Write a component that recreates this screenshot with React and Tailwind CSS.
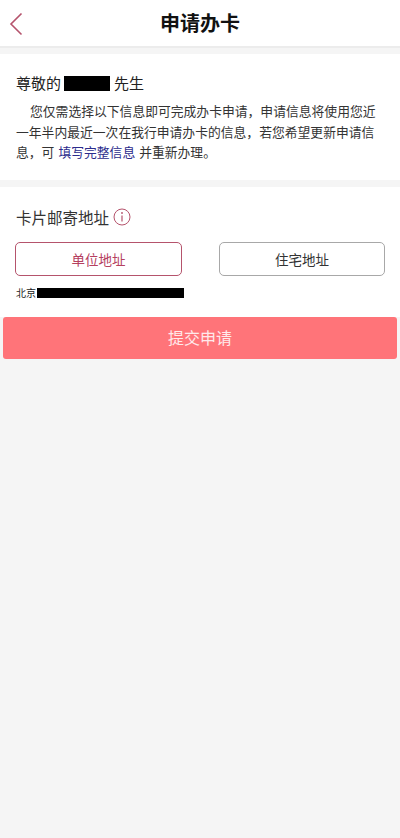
import React from "react";

const App = () => {
  return (
    <div className="w-[400px] h-[838px] flex flex-col bg-[#f5f5f5] font-['Noto_Sans_CJK_SC',sans-serif]">
      {/* Header */}
      <header className="h-[48px] shrink-0 bg-white border-b-2 border-[#ececec] flex items-center justify-center relative">
        <svg className="absolute left-[9px] top-[12px]" width="14" height="24" viewBox="0 0 14 24" fill="none">
          <path d="M12.5 1.5 L2 12 L12.5 22.5" stroke="#b5536c" strokeWidth="1.6" />
        </svg>
        <h1 className="text-[20px] leading-none font-bold text-[#111]">申请办卡</h1>
      </header>

      {/* Greeting */}
      <section className="mt-[6px] h-[126px] shrink-0 bg-white px-[16px] pt-[18px]">
        <div className="flex items-center text-[15px] leading-[22px] text-[#222]">
          <span>尊敬的</span>
          <span className="w-[46px] h-[15px] bg-black ml-[3px] mr-[4px]" />
          <span>先生</span>
        </div>
        <div className="mt-[7px] text-[12.8px] leading-[20.5px] text-[#333] whitespace-nowrap">
          <p className="pl-[14px]">您仅需选择以下信息即可完成办卡申请，申请信息将使用您近</p>
          <p>一年半内最近一次在我行申请办卡的信息，若您希望更新申请信</p>
          <p className="flex">
            <span>息，可</span>
            <span className="text-[#2b2b8c] mx-[4px]">填写完整信息</span>
            <span>并重新办理。</span>
          </p>
        </div>
      </section>

      {/* Address */}
      <section className="mt-[7px] h-[130px] shrink-0 bg-white pl-[15px] pr-[15px] pt-[19px]">
        <div className="flex items-center gap-[4px] pl-[1px]">
          <span className="text-[15.5px] leading-[22px] text-[#333]">卡片邮寄地址</span>
          <svg width="18" height="18" viewBox="0 0 18 18" fill="none">
            <circle cx="9" cy="9" r="8" stroke="#b5536c" strokeWidth="1" />
            <path d="M9 7.5 V13.5" stroke="#b5536c" strokeWidth="1.2" />
            <circle cx="9" cy="5" r="0.9" fill="#b5536c" />
          </svg>
        </div>
        <div className="mt-[14px] flex justify-between">
          <button className="w-[167px] h-[34px] rounded-[5px] border-[1.5px] border-[#b5536c] text-[13.5px] text-[#b5405f]">
            单位地址
          </button>
          <button className="w-[166px] h-[34px] rounded-[5px] border-[1.5px] border-[#a8a8a8] text-[13.5px] text-[#333]">
            住宅地址
          </button>
        </div>
        <div className="mt-[11px] pl-[1px] flex items-center text-[10px] leading-[12px] text-[#222]">
          <span>北京</span>
          <span className="w-[147px] h-[10px] bg-black ml-[1px]" />
        </div>
      </section>

      {/* Submit */}
      <div className="px-[3px]">
        <button className="w-full h-[42px] pb-[2px] rounded-[3px] bg-[#ff7479] text-[16px] text-[#ffe9ea]">
          提交申请
        </button>
      </div>
    </div>
  );
};

export default App;
